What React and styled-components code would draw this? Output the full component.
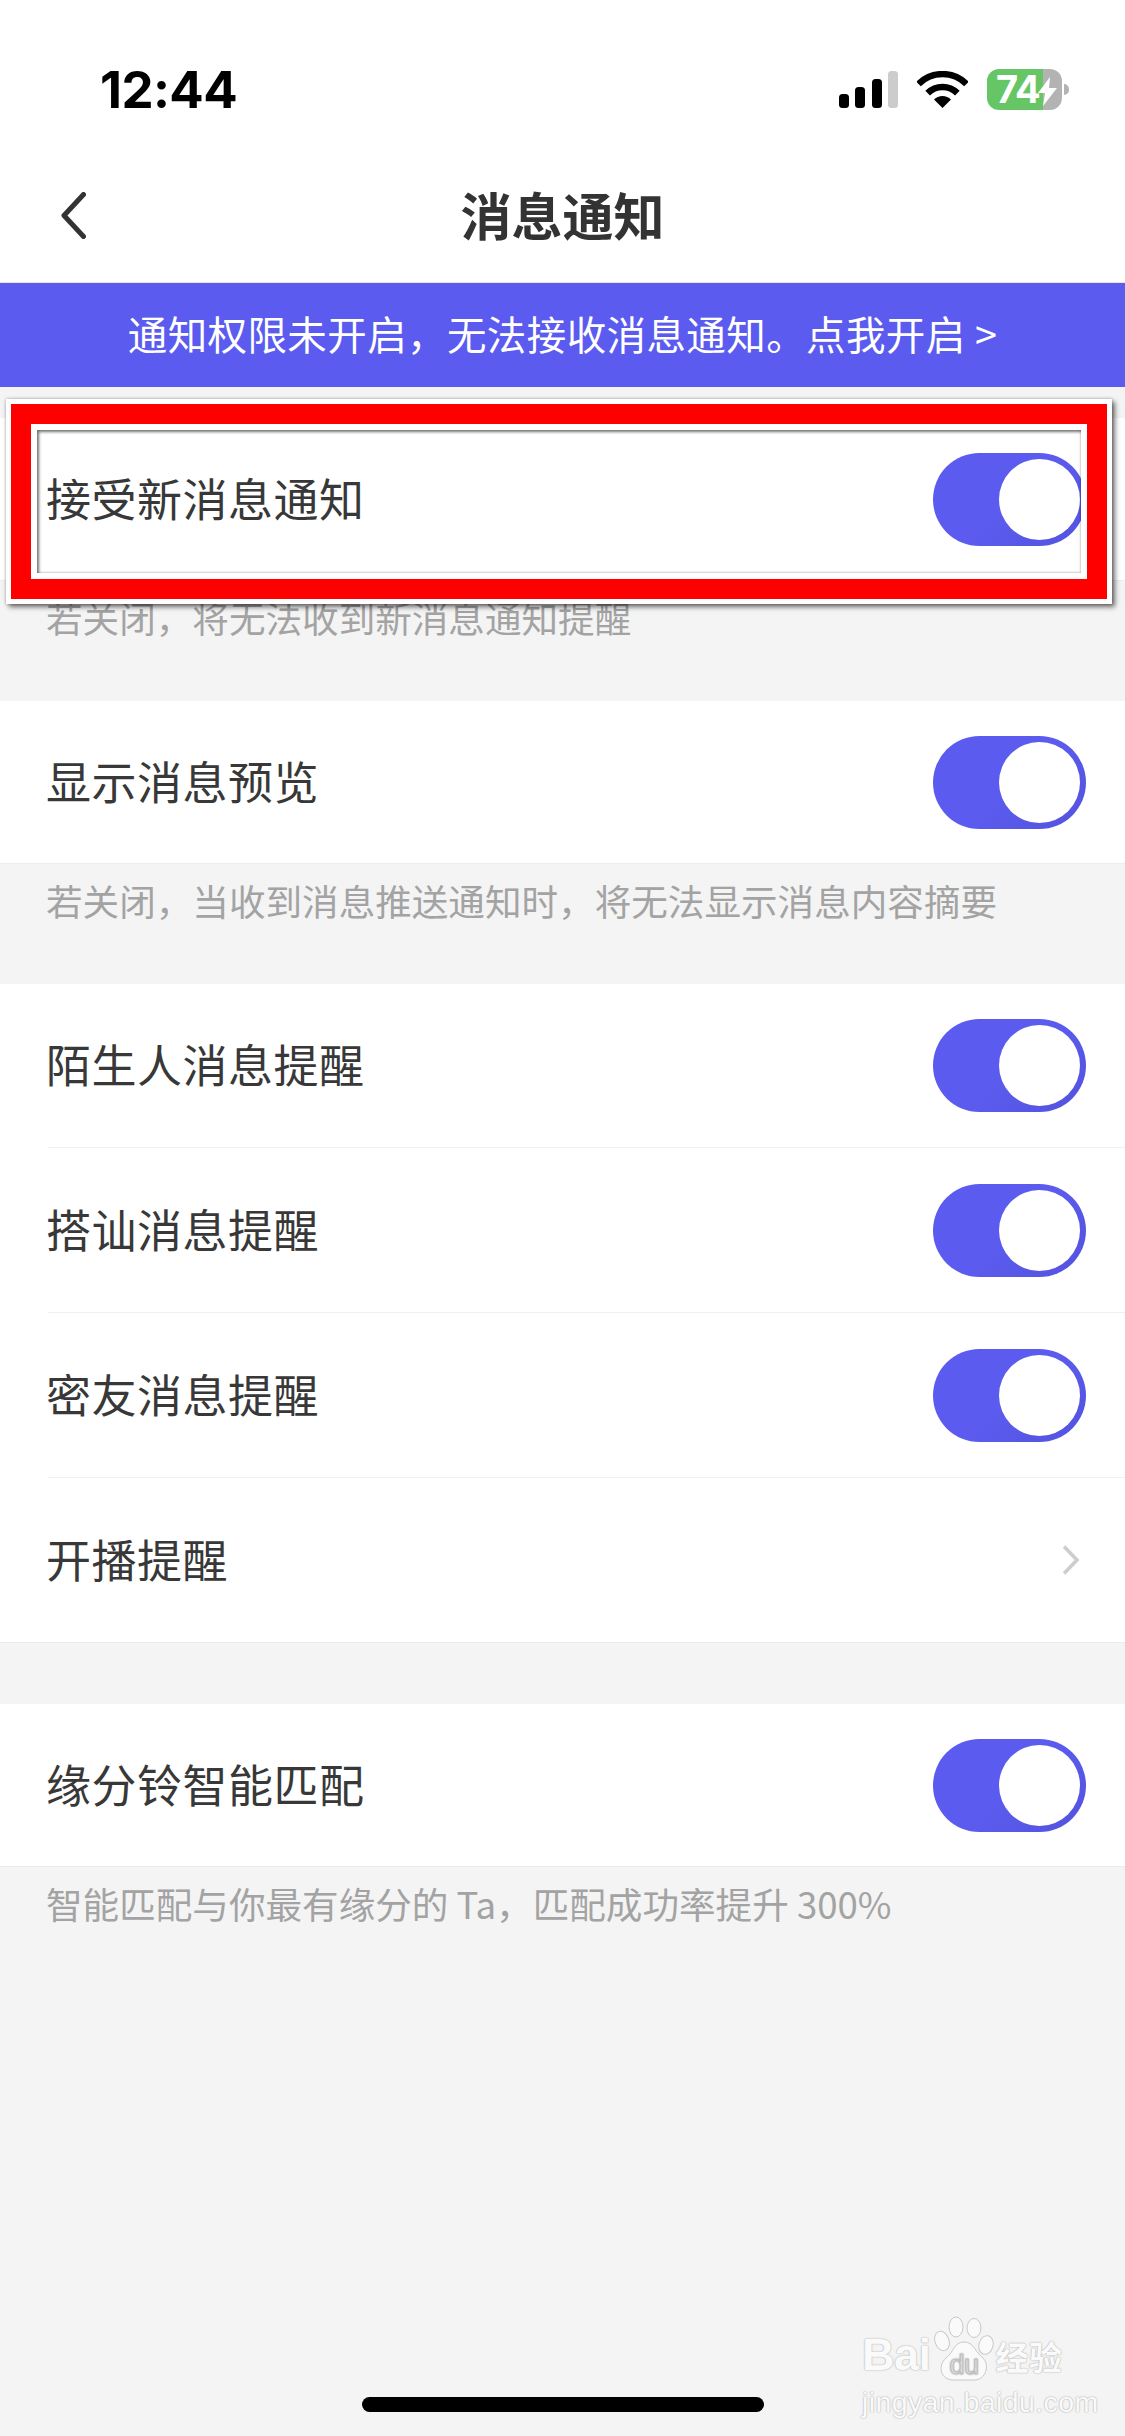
import React from "react";
import styled, { createGlobalStyle } from "styled-components";

const GlobalStyle = createGlobalStyle`
  html, body {
    margin: 0;
    padding: 0;
    background: #f4f4f4;
  }
  * {
    box-sizing: border-box;
  }
`;

const Page = styled.div`
  position: relative;
  width: 1125px;
  height: 2436px;
  overflow: hidden;
  background: #f4f4f4;
  color: #383838;
  font-family: "Noto Sans CJK SC", "Noto Sans", sans-serif;
`;

const Header = styled.header`
  background: #fff;
`;

const StatusBar = styled.div`
  height: 150px;
  padding: 28px 56px 0 100px;
  display: flex;
  align-items: center;
  justify-content: space-between;
`;

const Clock = styled.span`
  font-family: Inter, "Liberation Sans", sans-serif;
  font-size: 51px;
  font-weight: 700;
  letter-spacing: -0.6px;
  color: #000;
`;

const StatusIcons = styled.div`
  display: flex;
  align-items: center;
`;

const Signal = styled.div`
  display: flex;
  align-items: flex-end;
  gap: 6.5px;
  height: 37px;
  margin-right: 19px;
`;

const SignalBar = styled.i`
  display: block;
  width: 10px;
  height: ${p => p.$h}px;
  border-radius: 3.5px;
  background: ${p => (p.$off ? "#cccccc" : "#000")};
`;

const Battery = styled.div`
  position: relative;
  width: 75px;
  height: 41px;
  margin-left: 19px;
  margin-right: 7px;
  padding-left: 9px;
  display: flex;
  align-items: center;
  border-radius: 12px;
  background: linear-gradient(90deg, #66c666 0 56px, #b3b3b3 56px);
  color: #fff;
  font-family: Inter, "Liberation Sans", sans-serif;
  font-size: 38px;
  font-weight: 700;
  letter-spacing: -1px;
  line-height: 41px;
  &:after {
    content: "";
    position: absolute;
    right: -7px;
    top: 15px;
    width: 5px;
    height: 11px;
    border-radius: 0 5px 5px 0;
    background: #b3b3b3;
  }
  svg {
    position: absolute;
    left: 51px;
    top: 8px;
  }
`;

const NavBar = styled.div`
  position: relative;
  height: 133px;
  padding-bottom: 5px;
  display: flex;
  align-items: center;
  justify-content: center;
  font-size: 51px;
  font-weight: 700;
  color: #333;
  border-bottom: 1px solid #e6e6e6;
  svg {
    position: absolute;
    left: 61px;
    top: 42px;
  }
`;

const Banner = styled.div`
  height: 104px;
  padding-bottom: 6px;
  display: flex;
  align-items: center;
  justify-content: center;
  background: #5b5bef;
  color: #fff;
  font-size: 39.5px;
  letter-spacing: 0.4px;
  white-space: pre;
`;

const Content = styled.main`
  padding-top: 31px;
`;

const Group = styled.section`
  background: #fff;
  border-bottom: 1px solid #ececec;
`;

const Row = styled.div`
  height: ${p => (p.$single ? 162 : 163)}px;
  margin-left: 48px;
  padding-right: 39px;
  display: flex;
  align-items: center;
  justify-content: space-between;
  font-size: 45px;
  & + & {
    height: 165px;
    border-top: 1px solid #f0f0f0;
  }
`;

const Label = styled.span`
  margin-left: -2px;
  padding-bottom: 4px;
  letter-spacing: 0.5px;
`;

const Toggle = styled.span`
  width: 153px;
  height: 93px;
  padding: 6px;
  display: flex;
  justify-content: flex-end;
  border-radius: 47px;
  background: linear-gradient(135deg, #5b5bef 50%, #5353de);
  &:after {
    content: "";
    width: 81px;
    height: 81px;
    border-radius: 50%;
    background: #fff;
  }
`;

const Arrow = styled.svg`
  margin-right: 7px;
`;

const Hint = styled.p`
  height: ${p => (p.$short ? 62 : 120)}px;
  margin: 0;
  padding: 11px 0 0 46px;
  font-size: 36.6px;
  line-height: 52px;
  color: #a3a3a3;
`;

const Spacer = styled.div`
  height: 61px;
`;

/* red annotation frame pasted on top of the screenshot */
const Highlight = styled.div`
  position: absolute;
  left: 6px;
  top: 399px;
  width: 1106px;
  height: 205px;
  border: 5px solid #fff;
  box-shadow: 3px 3px 5px rgba(0, 0, 0, 0.55), 0 0 3px rgba(0, 0, 0, 0.3);
`;

const HighlightRed = styled.div`
  height: 100%;
  border: 20px solid #ff0000;
`;

const HighlightInner = styled.div`
  height: 100%;
  border: 6px solid #fff;
  position: relative;
  &:after {
    content: "";
    position: absolute;
    inset: 0;
    box-shadow: inset 2px 2px 3px rgba(0, 0, 0, 0.55), inset -1px -1px 2px rgba(0, 0, 0, 0.18);
  }
`;

const HomeIndicator = styled.div`
  position: absolute;
  left: 362px;
  top: 2397px;
  width: 402px;
  height: 15px;
  border-radius: 7.5px;
  background: #000;
`;

const Watermark = styled.div`
  position: absolute;
  left: 862px;
  top: 2314px;
  width: 206px;
  color: #fafafa;
  text-shadow: 0 0 2px #b5b5b5, 0 0 1px #b5b5b5;
`;

const WatermarkLogo = styled.div`
  display: flex;
  align-items: flex-end;
  height: 68px;
  font-family: "Liberation Sans", sans-serif;
  font-weight: 700;
  font-size: 45px;
  line-height: 54px;
  letter-spacing: -0.5px;
  white-space: nowrap;
`;

const WatermarkCn = styled.span`
  flex: none;
  font-family: "Noto Sans CJK SC", sans-serif;
  font-size: 33px;
  letter-spacing: 0.5px;
  line-height: 52px;
`;

const WatermarkUrl = styled.div`
  font-family: "Liberation Sans", sans-serif;
  font-size: 28.5px;
  line-height: 34px;
  margin-top: 3px;
  letter-spacing: 0.4px;
  white-space: nowrap;
`;

const Paw = styled.svg`
  flex: none;
  margin: 0 2px 0 3px;
`;

const BackIcon = () => (
  <svg width="25" height="47" viewBox="0 0 25 47" fill="none">
    <path d="M22.5 2.5L3 23.5L22.5 44.5" stroke="#333" strokeWidth="5" strokeLinecap="round" strokeLinejoin="round" />
  </svg>
);

const WifiIcon = () => (
  <svg width="51" height="37" viewBox="0 0 51 37" fill="none">
    <path d="M1.5 13A34 34 0 0 1 49.5 13" stroke="#000" strokeWidth="6.5" />
    <path d="M10.65 22.15A21 21 0 0 1 40.35 22.15" stroke="#000" strokeWidth="6.5" />
    <path d="M25.5 37L17 28.5A12 12 0 0 1 34 28.5Z" fill="#000" />
  </svg>
);

const BoltIcon = () => (
  <svg width="19" height="29" viewBox="0 0 19 29">
    <path d="M12 0L0 16H7L5 29L19 11H11Z" fill="#fff" />
  </svg>
);

const PawIcon = () => (
  <Paw width="60" height="66" viewBox="0 0 60 66">
    <g fill="#fafafa" stroke="#c8c8c8" strokeWidth="1">
      <ellipse cx="8" cy="25" rx="7" ry="10" transform="rotate(-20 8 25)" />
      <ellipse cx="22" cy="11" rx="7" ry="10" />
      <ellipse cx="40" cy="12" rx="7" ry="9.5" />
      <ellipse cx="52" cy="29" rx="7" ry="9.5" transform="rotate(15 52 29)" />
      <path d="M30 26C40 26 41 36 49 42C56 49 52 64 40 64H19C7 64 3 50 12 42C20 36 20 26 30 26Z" />
    </g>
    <text x="30" y="58" textAnchor="middle" fontFamily="Liberation Sans" fontSize="27" fontWeight="400" fill="#f0f0f0" stroke="#bdbdbd" strokeWidth="0.6">du</text>
  </Paw>
);

const ArrowIcon = () => (
  <Arrow width="16" height="30" viewBox="0 0 16 30" fill="none">
    <path d="M1 1.5L14 15L1 28.5" stroke="#cdcdcd" strokeWidth="3.5" />
  </Arrow>
);

const ToggleRow = ({ label, single }) => (
  <Row $single={single}>
    <Label>{label}</Label>
    <Toggle />
  </Row>
);

export default function App() {
  return (
    <Page>
      <GlobalStyle />
      <Header>
        <StatusBar>
          <Clock>12:44</Clock>
          <StatusIcons>
            <Signal>
              <SignalBar $h={14} />
              <SignalBar $h={21} />
              <SignalBar $h={29} />
              <SignalBar $h={37} $off />
            </Signal>
            <WifiIcon />
            <Battery>
              74
              <BoltIcon />
            </Battery>
          </StatusIcons>
        </StatusBar>
        <NavBar>
          <BackIcon />
          消息通知
        </NavBar>
      </Header>
      <Banner>通知权限未开启，无法接收消息通知。点我开启 &gt;</Banner>
      <Content>
        <Group>
          <ToggleRow single label="接受新消息通知" />
        </Group>
        <Hint>若关闭，将无法收到新消息通知提醒</Hint>
        <Group>
          <ToggleRow single label="显示消息预览" />
        </Group>
        <Hint>若关闭，当收到消息推送通知时，将无法显示消息内容摘要</Hint>
        <Group>
          <ToggleRow label="陌生人消息提醒" />
          <ToggleRow label="搭讪消息提醒" />
          <ToggleRow label="密友消息提醒" />
          <Row>
            <Label>开播提醒</Label>
            <ArrowIcon />
          </Row>
        </Group>
        <Spacer />
        <Group>
          <ToggleRow single label="缘分铃智能匹配" />
        </Group>
        <Hint $short>智能匹配与你最有缘分的 Ta，匹配成功率提升 300%</Hint>
      </Content>
      <Highlight>
        <HighlightRed>
          <HighlightInner />
        </HighlightRed>
      </Highlight>
      <Watermark>
        <WatermarkLogo>
          Bai
          <PawIcon />
          <WatermarkCn>经验</WatermarkCn>
        </WatermarkLogo>
        <WatermarkUrl>jingyan.baidu.com</WatermarkUrl>
      </Watermark>
      <HomeIndicator />
    </Page>
  );
}
